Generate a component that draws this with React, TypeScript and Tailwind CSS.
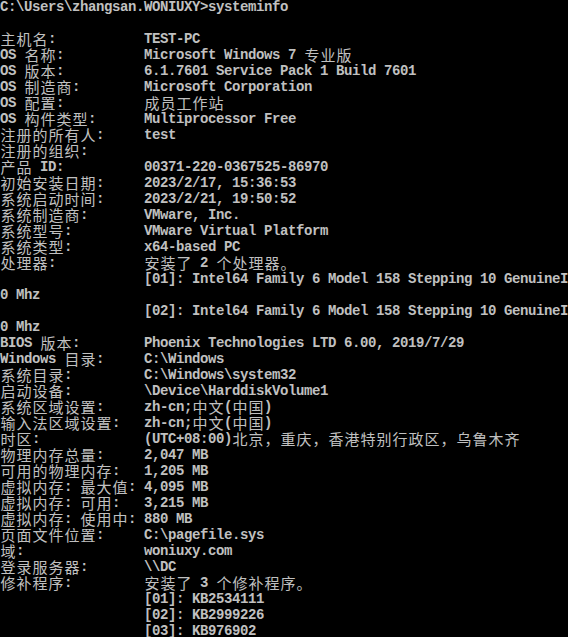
import React from "react";

type Row = { label?: string; value?: string; raw?: string };

const rows: Row[] = [
  { raw: "C:\\Users\\zhangsan.WONIUXY>systeminfo" },
  { raw: "" },
  { label: "主机名:", value: "TEST-PC" },
  { label: "OS 名称:", value: "Microsoft Windows 7 专业版" },
  { label: "OS 版本:", value: "6.1.7601 Service Pack 1 Build 7601" },
  { label: "OS 制造商:", value: "Microsoft Corporation" },
  { label: "OS 配置:", value: "成员工作站" },
  { label: "OS 构件类型:", value: "Multiprocessor Free" },
  { label: "注册的所有人:", value: "test" },
  { label: "注册的组织:", value: "" },
  { label: "产品 ID:", value: "00371-220-0367525-86970" },
  { label: "初始安装日期:", value: "2023/2/17, 15:36:53" },
  { label: "系统启动时间:", value: "2023/2/21, 19:50:52" },
  { label: "系统制造商:", value: "VMware, Inc." },
  { label: "系统型号:", value: "VMware Virtual Platform" },
  { label: "系统类型:", value: "x64-based PC" },
  { label: "处理器:", value: "安装了 2 个处理器。" },
  { label: "", value: "[01]: Intel64 Family 6 Model 158 Stepping 10 GenuineI" },
  { raw: "0 Mhz" },
  { label: "", value: "[02]: Intel64 Family 6 Model 158 Stepping 10 GenuineI" },
  { raw: "0 Mhz" },
  { label: "BIOS 版本:", value: "Phoenix Technologies LTD 6.00, 2019/7/29" },
  { label: "Windows 目录:", value: "C:\\Windows" },
  { label: "系统目录:", value: "C:\\Windows\\system32" },
  { label: "启动设备:", value: "\\Device\\HarddiskVolume1" },
  { label: "系统区域设置:", value: "zh-cn;中文(中国)" },
  { label: "输入法区域设置:", value: "zh-cn;中文(中国)" },
  { label: "时区:", value: "(UTC+08:00)北京，重庆，香港特别行政区，乌鲁木齐" },
  { label: "物理内存总量:", value: "2,047 MB" },
  { label: "可用的物理内存:", value: "1,205 MB" },
  { label: "虚拟内存: 最大值:", value: "4,095 MB" },
  { label: "虚拟内存: 可用:", value: "3,215 MB" },
  { label: "虚拟内存: 使用中:", value: "880 MB" },
  { label: "页面文件位置:", value: "C:\\pagefile.sys" },
  { label: "域:", value: "woniuxy.com" },
  { label: "登录服务器:", value: "\\\\DC" },
  { label: "修补程序:", value: "安装了 3 个修补程序。" },
  { label: "", value: "[01]: KB2534111" },
  { label: "", value: "[02]: KB2999226" },
  { label: "", value: "[03]: KB976902" },
];

// ascii runs are 8px per cell, wide chars take two cells
function Cells({ text }: { text: string }) {
  const parts = text.match(/[\u0000-\u00ff]+|[^\u0000-\u00ff]/gu) ?? [];
  return (
    <>
      {parts.map((p, i) =>
        /^[\u0000-\u00ff]/.test(p) ? (
          <span
            key={i}
            className="inline-block font-['Liberation_Mono',monospace] text-[14px] leading-[14px] font-bold tracking-[-0.4px] whitespace-pre"
          >
            {p}
          </span>
        ) : (
          <span
            key={i}
            className="inline-block w-4 text-center font-['Noto_Sans_CJK_SC',sans-serif] text-[15px] leading-[14px] font-normal"
          >
            {p}
          </span>
        )
      )}
    </>
  );
}

export default function App() {
  return (
    <div className="h-[637px] w-[568px] overflow-hidden bg-black text-[#c0c0c0]">
      {rows.map((r, i) => (
        <div key={i} className="flex h-4 items-start whitespace-nowrap">
          {r.raw !== undefined ? (
            <Cells text={r.raw} />
          ) : (
            <>
              <div className="flex w-[144px] shrink-0">
                <Cells text={r.label ?? ""} />
              </div>
              <div className="flex">
                <Cells text={r.value ?? ""} />
              </div>
            </>
          )}
        </div>
      ))}
    </div>
  );
}
